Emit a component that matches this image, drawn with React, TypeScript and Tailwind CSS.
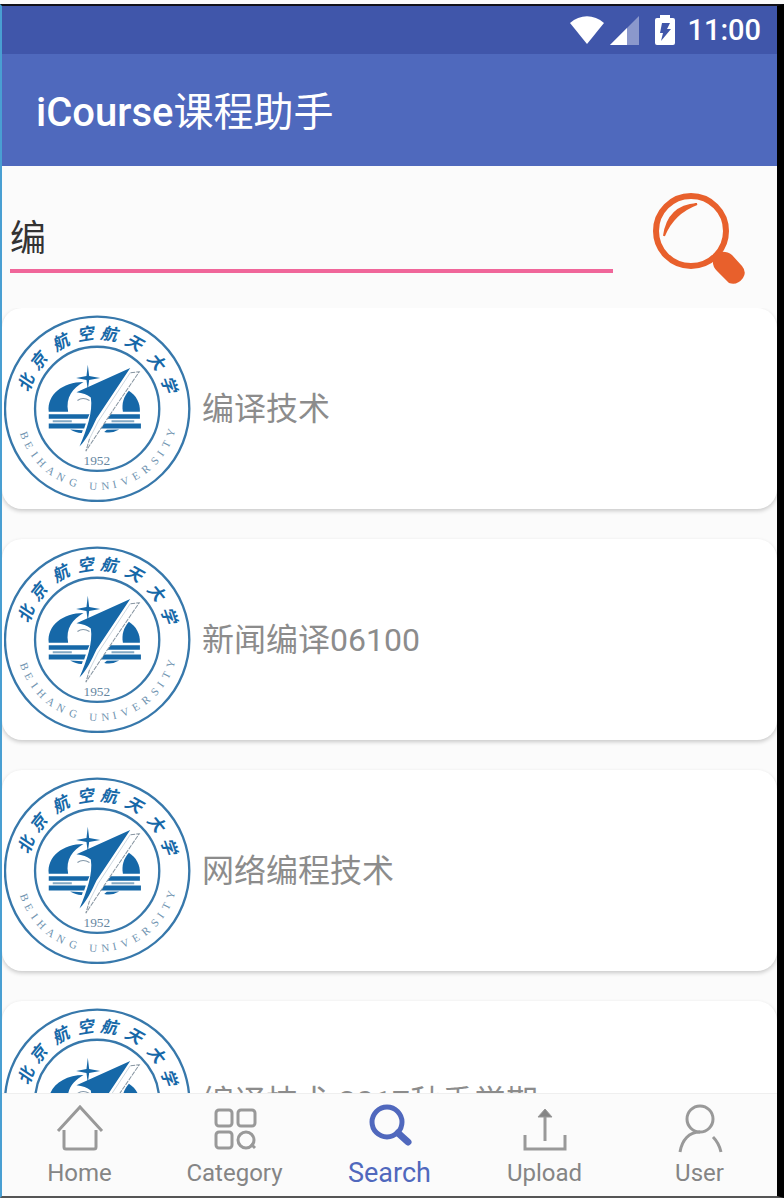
import { useState } from "react";
import type { ReactNode } from "react";

const BLUE = "#1668a8";

const motto: [string, number][] = [
  ["北", -70], ["京", -51], ["航", -29], ["空", -9], ["航", 9], ["天", 29], ["大", 51], ["学", 71],
];

const latin: [string, number][] = [
  ["B", 70], ["E", 62], ["I", 54], ["H", 46], ["A", 37], ["N", 28], ["G", 18],
  ["U", 3], ["N", -6], ["I", -13], ["V", -21], ["E", -30], ["R", -39], ["S", -48], ["I", -55], ["T", -63], ["Y", -72],
];

function Emblem() {
  return (
    <svg viewBox="12 43 560 560" className="size-[187px] shrink-0" role="img">
      <circle cx="291" cy="324" r="276" fill="#fff" stroke="#3778ab" strokeWidth="7" />
      <circle cx="291" cy="324" r="186" fill="none" stroke="#3778ab" strokeWidth="7" />
      <g fill={BLUE} fontFamily="'Noto Sans CJK SC', sans-serif" fontWeight="700" fontSize="50" fontStyle="italic" textAnchor="middle">
        {motto.map(([c, a], i) => (
          <text key={i} x="291" y="115" transform={`rotate(${a} 291 324)`}>{c}</text>
        ))}
      </g>
      <g fill="#6f93b0" fontFamily="'Liberation Serif', serif" fontSize="33" textAnchor="middle">
        {latin.map(([c, a], i) => (
          <text key={i} x="291" y="567" transform={`rotate(${a} 291 324)`}>{c}</text>
        ))}
      </g>
      <text x="290" y="492" fill="#66869f" fontFamily="'Liberation Serif', serif" fontSize="40" textAnchor="middle">1952</text>
      <g fill={BLUE}>
        <path d="M146 333 C140 282 188 244 250 244 C218 262 196 290 204 333 Z" />
        <path d="M368 333 C364 308 370 288 386 270 C408 284 420 306 419 333 Z" />
        <path d="M146 340 H268 L262 354 H146 Z M146 368 H257 L252 383 H146 Z" />
        <path d="M331 340 H419 V354 H321 Z M312 368 H422 V383 H302 Z" />
        <path d="M210 386 Q230 397 245 396 L248 388 Z M357 386 Q335 399 312 393 L320 387 Z" />
        <path d="M263 192 L267 226 L300 232 L267 238 L263 268 L259 238 L228 232 L259 226 Z" />
        <path d="M390 202 L229 274 C248 276 261 280 272 290 C279 332 260 386 238 437 C262 412 272 388 289 353 Z" />
      </g>
      <path d="M158 361 H215 M334 361 H402" stroke="#84a9c4" strokeWidth="6" />
      <path d="M232 299 Q248 287 268 299" stroke="#8397a8" strokeWidth="3" fill="none" />
      <path d="M388 212 L417 213 L340 326 L257 451 L268 414 L294 358 Z" fill="#fff" />
      <path d="M391 216 L417 213 L340 326 L257 451 L268 414" fill="none" stroke="#8795a1" strokeWidth="3" strokeDasharray="14 3" />
      <path d="M390 216 L294 362 L268 414" fill="none" stroke="#b4c2ce" strokeWidth="2" />
    </svg>
  );
}

function StatusBar() {
  return (
    <div className="flex h-12 shrink-0 items-center justify-end bg-[#4056aa] pr-4 text-white">
      <svg viewBox="0 0 36 30" className="mr-1 h-[30px] w-9" fill="currentColor">
        <path d="M1 8 C11 -1 25 -1 35 8 L18 29 Z" />
      </svg>
      <svg viewBox="0 0 30 30" className="mr-4 size-[30px]">
        <path d="M30 1 V30 H1 Z" fill="#8b98cc" />
        <path d="M18 13 V30 H1 Z" fill="#fff" />
      </svg>
      <svg viewBox="0 0 20 30" className="mr-3 h-[30px] w-5">
        <path d="M5 0 H15 V3 H18 Q20 3 20 5 V28 Q20 30 18 30 H2 Q0 30 0 28 V5 Q0 3 2 3 H5 Z" fill="#fff" />
        <path d="M7 8 H15 L12 14 H16 L6 26 L8 18 H5 Z" fill="#4056aa" />
      </svg>
      <span className="text-[29px] leading-8 font-medium">11:00</span>
    </div>
  );
}

const courses = ["编译技术", "新闻编译06100", "网络编程技术", "编译技术 2017秋季学期"];

const tabs: { name: string; icon: ReactNode }[] = [
  {
    name: "Home",
    icon: <path d="M2 27 L24 3 L46 27 M8 26 V43 Q8 45 10 45 H38 Q40 45 40 43 V26" />,
  },
  {
    name: "Category",
    icon: (
      <>
        <rect x="5" y="6" width="16" height="16" rx="3" />
        <rect x="27" y="6" width="17" height="16" rx="3" />
        <rect x="5" y="28" width="16" height="16" rx="3" />
        <circle cx="35" cy="36" r="8" />
        <path d="M40 40 L44 44" />
      </>
    ),
  },
  {
    name: "Search",
    icon: (
      <>
        <circle cx="21" cy="18" r="15" strokeWidth="5" />
        <path d="M32 29 L42 38" strokeWidth="7" strokeLinecap="round" />
      </>
    ),
  },
  {
    name: "Upload",
    icon: (
      <>
        <path d="M4 31 V45 H44 V31 M24 12 V37" />
        <path d="M24 5 L31 13 H17 Z" fill="#858585" strokeWidth="1" />
      </>
    ),
  },
  {
    name: "User",
    icon: (
      <>
        <circle cx="24" cy="15" r="13" />
        <path d="M4 48 C6 36 13 28 24 28 M37 33 Q43 39 45 48" />
      </>
    ),
  },
];

export default function App() {
  const [query, setQuery] = useState("编");
  const [active, setActive] = useState("Search");

  return (
    <div className="flex h-screen flex-col border-t-4 border-[#fafafa] bg-[#fbfbfb] font-[Roboto,'Noto_Sans_CJK_SC',sans-serif]">
      <div className="flex min-h-0 flex-1 flex-col border-t-2 border-r-[7px] border-b-2 border-l-2 border-t-[#101018] border-r-black border-b-[#555555] border-l-[#499fd2]">
        <StatusBar />
        <header className="flex h-28 shrink-0 items-center bg-[#4f69bd] px-[34px] pt-1.5 text-white">
          <h1 className="text-[40px] leading-12 font-medium">
            iCourse<span className="font-normal">课程助手</span>
          </h1>
        </header>

        <form className="flex h-[142px] shrink-0 items-center pr-8 pl-2" onSubmit={(e) => e.preventDefault()}>
          <input
            aria-label="Search courses"
            value={query}
            onChange={(e) => setQuery(e.target.value)}
            className="h-[72px] min-w-0 flex-1 border-b-4 border-[#f0669a] bg-transparent text-4xl text-[#333333] outline-none"
          />
          <button type="submit" aria-label="Submit" className="ml-10 shrink-0 pt-1">
            <svg viewBox="0 0 92 92" className="size-[92px]" fill="none">
              <circle cx="38" cy="38" r="35" stroke="#e8602c" strokeWidth="6" />
              <path d="M44 11 Q15 13 11 43 Q20 20 44 11 Z" fill="#e8602c" stroke="#e8602c" strokeWidth="2" />
              <path d="M60 67 L60 61 L67 59 Q74 58 79 62 L89 73 Q94 79 90 85 Q84 93 76 90 L64 78 Q59 73 60 67 Z" fill="#e8602c" />
            </svg>
          </button>
        </form>

        <ul className="flex min-h-0 flex-1 flex-col gap-[30px] overflow-hidden">
          {courses.map((name) => (
            <li
              key={name}
              className="flex h-[201px] shrink-0 items-center gap-[11px] rounded-[20px] bg-white pl-0.5 shadow-[0_2px_4px_rgba(0,0,0,0.2)]"
            >
              <Emblem />
              <span className="text-[32px] leading-10 text-[#8c8c8c]">{name}</span>
            </li>
          ))}
        </ul>

        <nav className="grid h-[103px] shrink-0 grid-cols-5 border-t border-[#efefef] bg-[#fbfbfb]">
          {tabs.map(({ name, icon }) => (
            <button
              key={name}
              type="button"
              onClick={() => setActive(name)}
              className={
                name === active
                  ? "flex flex-col items-center pt-2.5 text-[27px] leading-8 text-[#5068bd]"
                  : "flex flex-col items-center pt-2.5 text-2xl leading-8 text-[#858585]"
              }
            >
              <svg viewBox="0 0 48 52" className="h-[52px] w-12 shrink-0" fill="none" stroke={name === active ? "#5068bd" : "#999999"} strokeWidth="3">
                {icon}
              </svg>
              <span className="mt-px">{name}</span>
            </button>
          ))}
        </nav>
      </div>
    </div>
  );
}
